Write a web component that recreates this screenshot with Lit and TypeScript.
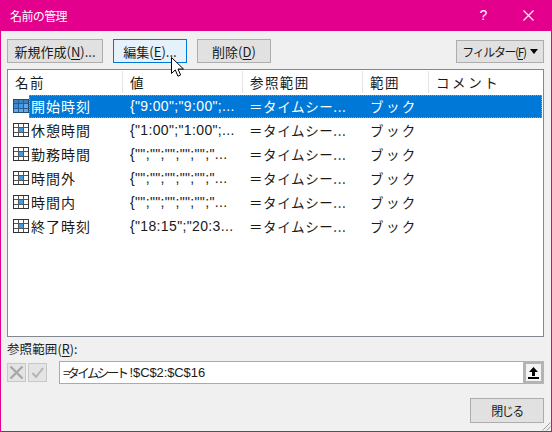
import { LitElement, html, css, svg } from "lit";
import { customElement } from "lit/decorators.js";

const ROWS = [
  ["開始時刻", '{"9:00";"9:00";...'],
  ["休憩時間", '{"1:00";"1:00";...'],
  ["勤務時間", '{"";"";"";"";"";"...'],
  ["時間外", '{"";"";"";"";"";"...'],
  ["時間内", '{"";"";"";"";"";"...'],
  ["終了時刻", '{"18:15";"20:3...'],
];

const tableIcon = (sel: boolean) => svg`<svg class="ticon" width="16" height="14" viewBox="0 0 16 14">
  <rect x="0.5" y="0.5" width="15" height="13" fill="${sel ? "#6aa5dc" : "#fff"}" stroke="${sel ? "#1f4e79" : "#333"}"/>
  <rect x="6" y="5" width="4" height="4" fill="#3f9ae8"/>
  ${sel ? svg`<rect x="1" y="1" width="14" height="3" fill="#3f7fbc"/><rect x="1" y="5" width="4" height="4" fill="#3f8ad0"/>` : null}
  <path d="M5.5 1V13M10.5 1V13M1 4.5H15M1 9.5H15" stroke="${sel ? "#1f5f9e" : "#555"}" stroke-width="1" fill="none"/>
</svg>`;

@customElement("app-root")
export class AppRoot extends LitElement {
  static styles = css`
    :host {
      display: block;
      width: 552px;
      height: 432px;
      font-family: "Noto Sans CJK JP", "Liberation Sans", sans-serif;
      font-size: 14px;
      color: #1a1a1a;
    }
    .win {
      position: relative;
      box-sizing: border-box;
      width: 552px;
      height: 432px;
      display: flex;
      flex-direction: column;
      background: #f0f0f0;
      border: 1px solid #e3008c;
      border-top: 0;
      overflow: hidden;
    }
    .title {
      box-sizing: border-box;
      height: 31px;
      flex: none;
      margin: 0 -1px;
      background: #e3008c;
      color: #fff;
      display: flex;
      align-items: center;
      padding: 0 0 1px 10px;
      font-size: 12px;
      letter-spacing: -0.6px;
    }
    .title .t { flex: 1; }
    .help { width: 16px; text-align: center; font: 14px "Liberation Sans", sans-serif; margin-right: 32px; }
    .close { margin-right: 18px; display: flex; }
    .content {
      flex: 1;
      display: flex;
      flex-direction: column;
      padding: 8px 7px 10px 6px;
      min-height: 0;
    }
    .toolbar { display: flex; height: 24px; flex: none; }
    .btn {
      box-sizing: border-box;
      height: 24px;
      border: 1px solid #adadad;
      background: #e1e1e1;
      display: flex;
      align-items: center;
      justify-content: center;
      font-size: 13px;
      white-space: nowrap;
      line-height: 1;
    }
    .btn u { text-underline-offset: 2px; }
    .new { width: 96px; }
    .edit { width: 74px; margin-left: 10px; background: #e5f1fb; border-color: #0078d7; }
    .del { width: 74px; margin-left: 10px; }
    .spacer { flex: 1; }
    .filter { width: 88px; font-size: 12px; letter-spacing: -1.4px; margin-top: 1px; height: 23px; }
    .arrow { width: 0; height: 0; border: 4px solid transparent; border-top: 5px solid #000; border-bottom: 0; margin-left: 4px; }
    .list {
      box-sizing: border-box;
      margin-top: 6px;
      height: 268px;
      flex: none;
      background: #fff;
      border: 1px solid #828790;
    }
    .row {
      display: grid;
      grid-template-columns: 115px 120px 120px 66px 1fr;
      align-items: center;
    }
    .head { height: 24px; font-size: 13.5px; }
    .head span {
      height: 22px;
      line-height: 22px;
      padding-left: 7px;
      border-right: 1px solid #e5e5e5;
      letter-spacing: 1.4px;
    }
    .head span:last-child { border-right: 0; letter-spacing: 2.6px; }
    .item { height: 24px; font-size: 13.5px; position: relative; }
    .item > div { white-space: nowrap; overflow: hidden; letter-spacing: 0.35px; }
    .item .name { display: flex; align-items: center; padding-left: 5px; letter-spacing: 1px; font-size: 14px; }
    .item .name span { margin-left: 0; padding-left: 2px; }
    .ticon { flex: none; }
    .item .v { padding-left: 7px; font-family: "Liberation Sans", "Noto Sans CJK JP", sans-serif; font-size: 14px; }
    .item .r { padding-left: 6px; letter-spacing: 0.6px; }
    .item .s { padding-left: 7px; letter-spacing: 2.4px; }
    .sel { color: #fff; }
    .sel::before {
      content: "";
      position: absolute;
      left: 21px;
      right: 1px;
      top: 1px;
      bottom: 0;
      background: #0078d7;
      outline: 1px dotted #e88a2a;
      outline-offset: -1px;
    }
    .sel > div { position: relative; }
    .rlabel { margin-top: 2px; height: 19px; font-size: 12.5px; line-height: 19px; letter-spacing: 0.1px; flex: none; }
    .rlabel u { text-underline-offset: 2px; }
    .refrow { display: flex; height: 23px; margin-top: 3px; flex: none; }
    .tool {
      box-sizing: border-box;
      width: 19px;
      height: 19px;
      margin-top: 2px;
      margin-right: 2px;
      border: 1px solid #c8c8c8;
      background: #e4e4e4;
      display: flex;
      align-items: center;
      justify-content: center;
    }
    .input {
      box-sizing: border-box;
      flex: 1;
      margin-left: 10px;
      border: 1px solid #ababab;
      background: #fff;
      display: flex;
      align-items: center;
      justify-content: space-between;
      font-size: 13.5px;
      padding-left: 3px;
    }
    .input .kana { font-size: 12.5px; letter-spacing: -2.6px; }
    .input .ref { font-family: "Liberation Sans", sans-serif; font-size: 13px; letter-spacing: -0.1px; margin-left: 3px; }
    .input > span { display: flex; align-items: center; }
    .collapse {
      box-sizing: border-box;
      width: 21px;
      height: 23px;
      margin: -1px;
      border: 3px solid #b4b4b4;
      background: #f4f4f4;
      display: flex;
      align-items: center;
      justify-content: center;
    }
    .footer { display: flex; justify-content: flex-end; margin-top: 14px; flex: none; }
    .closebtn { width: 74px; height: 25px; font-size: 12px; letter-spacing: -1.5px; }
    .cursor { position: absolute; left: 170px; top: 57px; }
    .grip { position: absolute; right: 0; bottom: 0; }
  `;

  render() {
    return html`<div class="win">
      <div class="title">
        <span class="t">名前の管理</span>
        <span class="help">?</span>
        <span class="close"><svg width="11" height="11" viewBox="0 0 11 11"><path d="M.5.5L10.5 10.5M10.5.5L.5 10.5" stroke="#fff" stroke-width="1.1" fill="none"/></svg></span>
      </div>
      <div class="content">
        <div class="toolbar">
          <div class="btn new">新規作成(<u>N</u>)...</div>
          <div class="btn edit">編集(<u>E</u>)...</div>
          <div class="btn del">削除(<u>D</u>)</div>
          <div class="spacer"></div>
          <div class="btn filter">フィルター(<u>F</u>)<span class="arrow"></span></div>
        </div>
        <div class="list">
          <div class="row head">
            <span>名前</span><span>値</span><span>参照範囲</span><span>範囲</span><span>コメント</span>
          </div>
          ${ROWS.map(
            ([n, v], i) => html`<div class="row item ${i === 0 ? "sel" : ""}">
              <div class="name">${tableIcon(i === 0)}<span>${n}</span></div>
              <div class="v">${v}</div>
              <div class="r">＝タイムシー...</div>
              <div class="s">ブック</div>
              <div></div>
            </div>`
          )}
        </div>
        <div class="rlabel">参照範囲(<u>R</u>):</div>
        <div class="refrow">
          <div class="tool"><svg width="15" height="15" viewBox="0 0 15 15"><path d="M1.5 1.5L13.5 13.5M13.5 1.5L1.5 13.5" stroke="#a8a8a8" stroke-width="2.4" fill="none"/></svg></div>
          <div class="tool"><svg width="13" height="13" viewBox="0 0 13 13"><path d="M1.5 7L5 11L12 2" stroke="#b4b4b4" stroke-width="2" fill="none"/></svg></div>
          <div class="input">
            <span><span class="kana">=タイムシート</span><span class="ref">!$C$2:$C$16</span></span>
            <div class="collapse"><svg width="11" height="12" viewBox="0 0 11 12"><path d="M5.5 0L10 5H7V9H4V5H1Z" fill="#000"/><rect x="0" y="10" width="11" height="2" fill="#000"/></svg></div>
          </div>
        </div>
        <div class="footer"><div class="btn closebtn">閉じる</div></div>
      </div>
      <svg class="cursor" width="14" height="21" viewBox="0 0 14 21"><path d="M.5.5V16.5L4.3 12.9L6.9 19.2L9.6 18L7 12H12.5Z" fill="#fff" stroke="#000" stroke-width="1"/></svg>
      <svg class="grip" width="10" height="10" viewBox="0 0 10 10"><path d="M9.5 1.5L1.5 9.5M9.5 5.5L5.5 9.5" stroke="#a0a0a0" stroke-width="1" fill="none"/></svg>
    </div>`;
  }
}
